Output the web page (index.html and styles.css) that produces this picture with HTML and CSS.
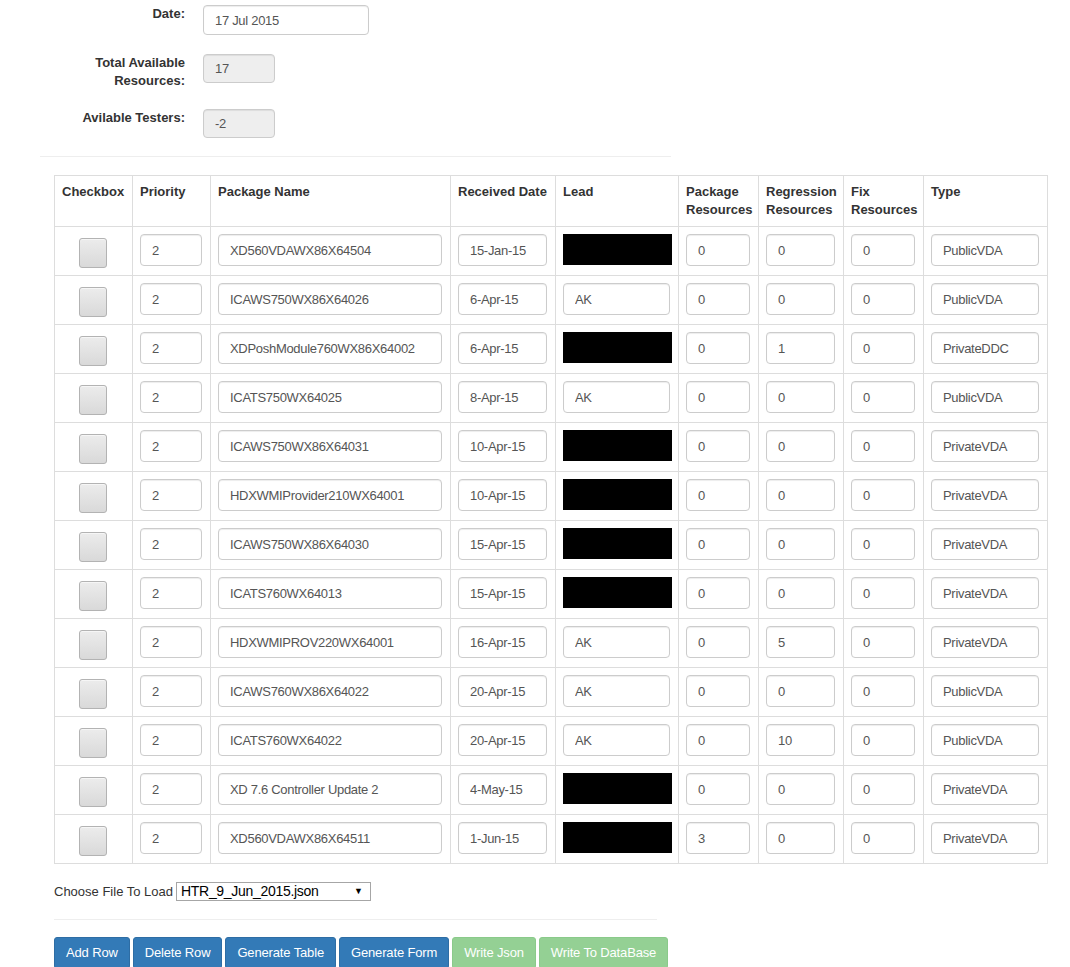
FILE: index.html
```html
<!DOCTYPE html>
<html>
<head>
<meta charset="utf-8">
<link rel="stylesheet" href="styles.css">
</head>
<body>
<div class="page">
  <form class="top-form">
    <div class="form-row">
      <label class="ctl-label">Date:</label>
      <input class="ctl date-input" type="text" value="17 Jul 2015">
    </div>
    <div class="form-row">
      <label class="ctl-label">Total Available Resources:</label>
      <input class="ctl small-input" type="text" value="17" disabled>
    </div>
    <div class="form-row">
      <label class="ctl-label">Avilable Testers:</label>
      <input class="ctl small-input" type="text" value="-2" disabled>
    </div>
  </form>
  <hr class="hr-top">

  <table class="grid">
    <colgroup>
      <col class="c-check"><col class="c-prio"><col class="c-name"><col class="c-date"><col class="c-lead"><col class="c-pres"><col class="c-rres"><col class="c-fres"><col class="c-type">
    </colgroup>
    <thead>
      <tr>
        <th>Checkbox</th><th>Priority</th><th>Package Name</th><th>Received Date</th><th>Lead</th><th>Package Resources</th><th>Regression Resources</th><th>Fix Resources</th><th>Type</th>
      </tr>
    </thead>
    <tbody id="rows"></tbody>
  </table>

  <div class="file-row">
    <span>Choose File To Load</span>
    <div class="select-wrap">
      <select class="file-select"><option>HTR_9_Jun_2015.json</option></select>
      <span class="arrow">&#9660;</span>
    </div>
  </div>
  <hr class="hr-bottom">

  <div class="buttons">
    <button class="btn btn-blue" type="button">Add Row</button>
    <button class="btn btn-blue" type="button">Delete Row</button>
    <button class="btn btn-blue" type="button">Generate Table</button>
    <button class="btn btn-blue" type="button">Generate Form</button>
    <button class="btn btn-green" type="button">Write Json</button>
    <button class="btn btn-green" type="button">Write To DataBase</button>
  </div>
</div>
<script src="app.js"></script>
</body>
</html>
```

FILE: app.js
```js
var data = [
  ["XD560VDAWX86X64504", "15-Jan-15", null, "0", "0", "0", "PublicVDA"],
  ["ICAWS750WX86X64026", "6-Apr-15", "AK", "0", "0", "0", "PublicVDA"],
  ["XDPoshModule760WX86X64002", "6-Apr-15", null, "0", "1", "0", "PrivateDDC"],
  ["ICATS750WX64025", "8-Apr-15", "AK", "0", "0", "0", "PublicVDA"],
  ["ICAWS750WX86X64031", "10-Apr-15", null, "0", "0", "0", "PrivateVDA"],
  ["HDXWMIProvider210WX64001", "10-Apr-15", null, "0", "0", "0", "PrivateVDA"],
  ["ICAWS750WX86X64030", "15-Apr-15", null, "0", "0", "0", "PrivateVDA"],
  ["ICATS760WX64013", "15-Apr-15", null, "0", "0", "0", "PrivateVDA"],
  ["HDXWMIPROV220WX64001", "16-Apr-15", "AK", "0", "5", "0", "PrivateVDA"],
  ["ICAWS760WX86X64022", "20-Apr-15", "AK", "0", "0", "0", "PublicVDA"],
  ["ICATS760WX64022", "20-Apr-15", "AK", "0", "10", "0", "PublicVDA"],
  ["XD 7.6 Controller Update 2", "4-May-15", null, "0", "0", "0", "PrivateVDA"],
  ["XD560VDAWX86X64511", "1-Jun-15", null, "3", "0", "0", "PrivateVDA"]
];
var tb = document.getElementById("rows");
var html = "";
data.forEach(function (r) {
  function inp(v) { return '<input class="ctl cell-input" type="text" value="' + v + '">'; }
  html += "<tr>" +
    '<td class="td-check"><div class="fake-check"></div></td>' +
    "<td>" + inp("2") + "</td>" +
    "<td>" + inp(r[0]) + "</td>" +
    "<td>" + inp(r[1]) + "</td>" +
    "<td>" + (r[2] === null ? '<div class="redacted"></div>' : inp(r[2])) + "</td>" +
    "<td>" + inp(r[3]) + "</td>" +
    "<td>" + inp(r[4]) + "</td>" +
    "<td>" + inp(r[5]) + "</td>" +
    "<td>" + inp(r[6]) + "</td>" +
    "</tr>";
});
tb.innerHTML = html;
```

FILE: styles.css
```css
* { box-sizing: border-box; }
html, body { margin: 0; padding: 0; background: #fff; }
body {
  font-family: "Liberation Sans", Arial, sans-serif;
  font-size: 13px;
  line-height: 18px;
  color: #333;
}
.page { width: 1070px; padding-top: 5px; }

.top-form { display: flex; flex-direction: column; gap: 19px; }
.form-row { display: flex; align-items: flex-start; }
.ctl-label {
  width: 188px;
  padding-left: 60px;
  padding-right: 3px;
  text-align: right;
  font-weight: bold;
  color: #333;
  line-height: 18px;
  margin-right: 15px;
}
.ctl {
  font-family: "Liberation Sans", Arial, sans-serif;
  font-size: 13px;
  letter-spacing: -0.3px;
  color: #555;
  background: #fff;
  border: 1px solid #ccc;
  border-radius: 4px;
  box-shadow: inset 0 1px 1px rgba(0,0,0,.075);
  padding: 0 11px;
  height: 30px;
  outline: none;
}
.ctl:disabled { background: #eee; color: #555; opacity: 1; }
.date-input { width: 166px; }
.small-input { width: 72px; height: 29px; }

.hr-top {
  margin: 18px 0 0 40px;
  width: 631px;
  border: 0;
  border-top: 1px solid #eee;
  height: 0;
}

.grid {
  margin: 18px 0 0 54px;
  width: 993px;
  border-collapse: collapse;
  table-layout: fixed;
}
.c-check { width: 78px; }
.c-prio { width: 78px; }
.c-name { width: 240px; }
.c-date { width: 105px; }
.c-lead { width: 123px; }
.c-pres { width: 80px; }
.c-rres { width: 85px; }
.c-fres { width: 80px; }
.c-type { width: 124px; }

.grid th, .grid td {
  border: 1px solid #ddd;
  vertical-align: top;
  text-align: left;
}
.grid th {
  font-weight: bold;
  color: #333;
  padding: 7px;
  height: 51px;
  line-height: 18px;
}
.grid td { height: 49px; padding: 7px 8px 7px 7px; }
.cell-input { width: 100%; height: 32px; display: block; }

.td-check { text-align: center; }
.fake-check {
  width: 28px;
  height: 30px;
  margin: 4px auto 0;
  border: 1px solid #b3b3b3;
  border-radius: 3px;
  background: linear-gradient(#ececec, #d9d9d9);
  box-shadow: inset 0 1px 0 #f6f6f6;
}
.redacted {
  width: 109px;
  height: 31px;
  background: #000;
}

.file-row {
  margin: 18px 0 0 54px;
  display: flex;
  align-items: center;
  gap: 3px;
  color: #333;
}
.select-wrap { position: relative; }
.file-select {
  -webkit-appearance: none;
  appearance: none;
  width: 195px;
  height: 19px;
  border: 1px solid #a6a6a6;
  border-radius: 0;
  background: #fff;
  color: #000;
  font-family: "Liberation Sans", Arial, sans-serif;
  font-size: 14px;
  letter-spacing: -0.3px;
  line-height: 17px;
  padding: 0 0 0 4px;
}
.arrow {
  position: absolute;
  right: 8px;
  top: 3px;
  font-size: 9px;
  line-height: 12px;
  color: #000;
  pointer-events: none;
}

.hr-bottom {
  margin: 18px 0 0 54px;
  width: 603px;
  border: 0;
  border-top: 1px solid #eee;
  height: 0;
}

.buttons {
  margin: 17px 0 0 54px;
  display: flex;
  gap: 3px;
}
.btn {
  font-family: "Liberation Sans", Arial, sans-serif;
  font-size: 13px;
  letter-spacing: -0.15px;
  line-height: 18px;
  color: #fff;
  border: 1px solid transparent;
  border-radius: 3px;
  padding: 6px 11px;
  height: 32px;
  cursor: pointer;
}
.btn-blue { background: #337ab7; border-color: #2e6da4; }
.btn-green { background: #5cb85c; border-color: #4cae4c; opacity: .65; }
```
